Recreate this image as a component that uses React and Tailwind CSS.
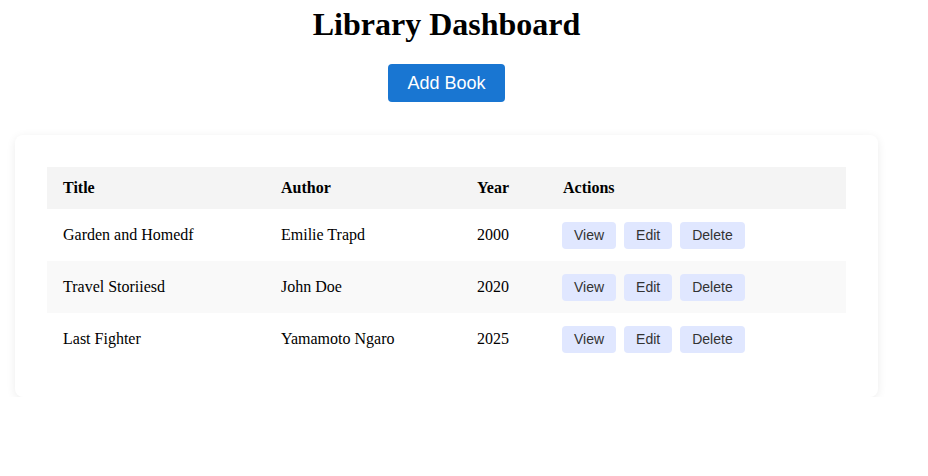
import React from "react";

const books = [
  { title: "Garden and Homedf", author: "Emilie Trapd", year: 2000 },
  { title: "Travel Storiiesd", author: "John Doe", year: 2020 },
  { title: "Last Fighter", author: "Yamamoto Ngaro", year: 2025 },
];

function ActionButton({ label }) {
  return (
    <button className="h-[27px] px-3 rounded bg-[#e0e7ff] text-[#333] text-[14px] font-['Liberation_Sans',Arial,sans-serif]">
      {label}
    </button>
  );
}

export default function App() {
  return (
    <div className="w-[893px] bg-white font-['Liberation_Serif','Times_New_Roman',serif] text-black">
      <h1 className="mt-[6px] text-[32px] leading-[37px] font-bold text-center">
        Library Dashboard
      </h1>

      <div className="flex justify-center mt-[21px]">
        <button className="w-[117px] h-[38px] rounded bg-[#1976d2] text-white text-[18px] font-['Liberation_Sans',Arial,sans-serif]">
          Add Book
        </button>
      </div>

      <div className="mx-[15px] mt-[33px] p-8 bg-white rounded-lg shadow-[0_2px_10px_rgba(0,0,0,0.08)]">
        <table className="w-full border-collapse text-left text-[16px]">
          <thead>
            <tr className="h-[42px] bg-[#f4f4f4]">
              <th className="w-[218px] px-4 font-bold">Title</th>
              <th className="w-[196px] px-4 font-bold">Author</th>
              <th className="w-[86px] px-4 font-bold">Year</th>
              <th className="px-4 font-bold">Actions</th>
            </tr>
          </thead>
          <tbody>
            {books.map((b, i) => (
              <tr key={i} className={`h-[52px] ${i % 2 === 1 ? "bg-[#f9f9f9]" : "bg-white"}`}>
                <td className="px-4">{b.title}</td>
                <td className="px-4">{b.author}</td>
                <td className="px-4">{b.year}</td>
                <td className="px-4">
                  <div className="flex gap-2 -ml-[1px]">
                    <ActionButton label="View" />
                    <ActionButton label="Edit" />
                    <ActionButton label="Delete" />
                  </div>
                </td>
              </tr>
            ))}
          </tbody>
        </table>
      </div>
    </div>
  );
}
